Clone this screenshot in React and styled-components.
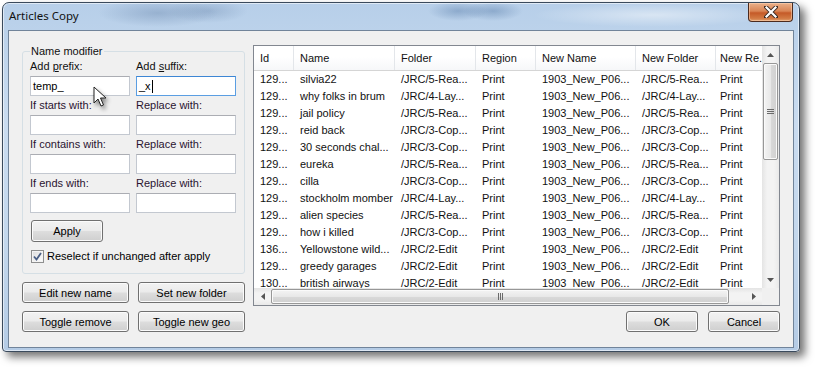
import React from 'react'
import styled, { createGlobalStyle } from 'styled-components'

const GlobalStyle = createGlobalStyle`
  html, body {
    margin: 0;
    padding: 0;
    background: #ffffff;
  }
  body {
    width: 816px;
    height: 368px;
    overflow: hidden;
    font-family: "Liberation Sans", Arial, sans-serif;
    font-size: 11px;
    color: #000;
  }
`;

const Desktop = styled.div`
  position: relative;
  width: 816px;
  height: 368px;
  padding: 2px 0 0 2px;
  box-sizing: border-box;
`;

const Window = styled.div`
  width: 798px;
  height: 350px;
  box-sizing: border-box;
  display: flex;
  flex-direction: column;
  padding: 0 5px 3px 5px;
  border: 1px solid #3a4a5c;
  border-radius: 7px 7px 4px 4px;
  background:
    radial-gradient(ellipse 60px 14px at 155px 10px, rgba(90, 120, 160, 0.35), transparent),
    radial-gradient(ellipse 40px 12px at 205px 8px, rgba(90, 120, 160, 0.3), transparent),
    radial-gradient(ellipse 30px 10px at 455px 8px, rgba(60, 100, 150, 0.35), transparent),
    radial-gradient(ellipse 30px 10px at 490px 8px, rgba(60, 100, 150, 0.35), transparent),
    radial-gradient(ellipse 120px 12px at 650px 12px, rgba(255, 255, 255, 0.45), transparent),
    linear-gradient(180deg, #b7cfe9 0%, #cadcf0 35%, #c3d7ec 70%, #b4cbe5 100%);
  box-shadow:
    inset 0 0 0 1px rgba(255, 255, 255, 0.55),
    5px 5px 8px rgba(0, 0, 0, 0.55);
`;

const TitleBar = styled.div`
  height: 27px;
  flex: none;
  display: flex;
  align-items: flex-start;
  justify-content: space-between;
`;

const Title = styled.div`
  font-family: "Noto Sans", "Open Sans", sans-serif;
  font-size: 11.5px;
  color: #111;
  line-height: 26px;
  padding-left: 1px;
`;

const CloseButton = styled.div`
  width: 45px;
  height: 19px;
  margin-right: 1px;
  box-sizing: border-box;
  border: 1px solid #4b2a1e;
  border-top: none;
  border-radius: 0 0 4px 4px;
  background: linear-gradient(180deg, #eab08a 0%, #d98555 45%, #c55a28 55%, #d27a43 85%, #e0a070 100%);
  box-shadow: inset 0 0 0 1px rgba(255, 220, 190, 0.5);
  display: flex;
  align-items: center;
  justify-content: center;
`;

const Client = styled.div`
  flex: 1;
  box-sizing: border-box;
  border: 1px solid #71849a;
  background: #f0f0f0;
  padding: 14px 13px 15px 13px;
  display: grid;
  grid-template-columns: 223px 527px;
  column-gap: 8px;
`;

const LeftColumn = styled.div`
  display: flex;
  flex-direction: column;
  gap: 8px;
`;

const RightColumn = styled.div`
  display: flex;
  flex-direction: column;
  gap: 5px;
`;

const GroupBox = styled.fieldset`
  margin: 0;
  height: 229px;
  box-sizing: border-box;
  border: 1px solid #d5dfe5;
  border-radius: 3px;
  padding: 1px 8px 0 7px;
  display: flex;
  flex-direction: column;
`;

const Legend = styled.legend`
  padding: 0 1px;
  line-height: 13px;
  color: #111;
`;

const FieldGrid = styled.div`
  display: grid;
  grid-template-columns: 100px 100px;
  column-gap: 6px;
  row-gap: 2px;
`;

const Field = styled.div`
  display: flex;
  flex-direction: column;
`;

const Label = styled.label`
  height: 14px;
  line-height: 14px;
  margin-bottom: 3px;
  color: ${p => (p.plain ? '#111' : '#2a1430')};
  white-space: nowrap;
`;

const TextBox = styled.div`
  height: 20px;
  box-sizing: border-box;
  background: #fff;
  border: 1px solid ${p => (p.focused ? '#5b9ee2' : '#c3c8d0')};
  border-top-color: ${p => (p.focused ? '#3d86d4' : '#abadb3')};
  padding: 0 2px;
  line-height: 18px;
  display: flex;
  align-items: center;
  white-space: nowrap;
`;

const Caret = styled.span`
  display: inline-block;
  width: 1px;
  height: 13px;
  background: #000;
  margin-left: 1px;
`;

const Button = styled.div`
  box-sizing: border-box;
  width: ${p => p.w}px;
  height: ${p => p.h || 21}px;
  border: 1px solid #707070;
  border-radius: 3px;
  background: linear-gradient(180deg, #f2f2f2 0%, #ebebeb 48%, #dddddd 52%, #cfcfcf 100%);
  box-shadow: inset 0 0 0 1px #fbfbfb;
  display: flex;
  align-items: center;
  justify-content: center;
  color: #000;
  white-space: nowrap;
`;

const ApplyButton = styled(Button)`
  margin: 7px 0 0 1px;
`;

const CheckRow = styled.div`
  display: flex;
  align-items: center;
  gap: 3px;
  height: 14px;
  margin: 7px 0 0 1px;
`;

const CheckBox = styled.div`
  width: 13px;
  height: 13px;
  box-sizing: border-box;
  border: 1px solid #8e8f8f;
  background: linear-gradient(135deg, #dcdcdc 0%, #f4f4f4 70%, #ffffff 100%);
  box-shadow: inset 0 0 0 1px #f4f4f4;
  display: flex;
  align-items: center;
  justify-content: center;
`;

const ButtonRow = styled.div`
  display: flex;
  gap: ${p => p.gap || 9}px;
  justify-content: ${p => (p.right ? 'flex-end' : 'flex-start')};
`;

const ListPanel = styled.div`
  height: 261px;
  box-sizing: border-box;
  border: 1px solid #828790;
  background: #fff;
  display: grid;
  grid-template-columns: 1fr 17px;
  grid-template-rows: 1fr 17px;
  overflow: hidden;
`;

const ListBody = styled.div`
  overflow: hidden;
  min-width: 0;
  min-height: 0;
`;

const columns = '40px 101px 81px 60px 100px 80px 47px';

const HeaderRow = styled.div`
  display: grid;
  grid-template-columns: ${columns};
  height: 25px;
  box-sizing: border-box;
  border-bottom: 1px solid #d5d5d5;
  background: linear-gradient(180deg, #ffffff 0%, #ffffff 45%, #f6f7f9 100%);
`;

const HeaderCell = styled.div`
  padding-left: ${p => (p.last ? 4 : 6)}px;
  line-height: 24px;
  border-right: ${p => (p.last ? 'none' : '1px solid #e3e6ea')};
  white-space: nowrap;
  overflow: hidden;
  color: #111;
`;

const Row = styled.div`
  display: grid;
  grid-template-columns: ${columns};
  height: 17px;
  line-height: 17px;
`;

const Cell = styled.div`
  padding-left: ${p => (p.last ? 4 : 6)}px;
  white-space: nowrap;
  overflow: hidden;
  color: #111;
`;

const VScroll = styled.div`
  display: flex;
  flex-direction: column;
  background: linear-gradient(90deg, #e4e4e4 0%, #f3f3f3 30%, #f3f3f3 70%, #e9e9e9 100%);
`;

const HScroll = styled.div`
  display: flex;
  background: linear-gradient(180deg, #e4e4e4 0%, #f3f3f3 30%, #f3f3f3 70%, #e9e9e9 100%);
`;

const Corner = styled.div`
  background: #f0f0f0;
`;

const ArrowButton = styled.div`
  flex: none;
  width: 17px;
  height: 17px;
  display: flex;
  align-items: center;
  justify-content: center;
`;

const VThumb = styled.div`
  flex: none;
  height: 97px;
  margin: 0 1px;
  box-sizing: border-box;
  border: 1px solid #979797;
  border-radius: 2px;
  background: linear-gradient(90deg, #f4f4f4 0%, #e8e8e8 50%, #d9d9d9 51%, #d0d0d0 100%);
  box-shadow: inset 0 0 0 1px #fafafa;
  display: flex;
  align-items: center;
  justify-content: center;
`;

const HThumb = styled.div`
  flex: none;
  width: 458px;
  margin: 1px 0;
  box-sizing: border-box;
  border: 1px solid #979797;
  border-radius: 2px;
  background: linear-gradient(180deg, #f4f4f4 0%, #e8e8e8 50%, #d9d9d9 51%, #d0d0d0 100%);
  box-shadow: inset 0 0 0 1px #fafafa;
  display: flex;
  align-items: center;
  justify-content: center;
`;

const Track = styled.div`
  flex: 1;
`;

const Cursor = styled.svg`
  position: absolute;
  left: 93px;
  top: 86px;
  filter: drop-shadow(2px 3px 2px rgba(0, 0, 0, 0.45));
`;

const Arrow = ({ dir }) => {
  const pts = {
    up: '0,4 3.5,0 7,4',
    down: '0,0 3.5,4 7,0',
    left: '4,0 0,3.5 4,7',
    right: '0,0 4,3.5 0,7',
  }[dir]
  const vertical = dir === 'up' || dir === 'down'
  return (
    <svg width={vertical ? 7 : 4} height={vertical ? 4 : 7}>
      <polygon points={pts} fill="#555" />
    </svg>
  )
}

const rows = [
  ['129...', 'silvia22', '/JRC/5-Rea...'],
  ['129...', 'why folks in brum', '/JRC/4-Lay...'],
  ['129...', 'jail policy', '/JRC/5-Rea...'],
  ['129...', 'reid back', '/JRC/3-Cop...'],
  ['129...', '30 seconds chal...', '/JRC/3-Cop...'],
  ['129...', 'eureka', '/JRC/5-Rea...'],
  ['129...', 'cilla', '/JRC/3-Cop...'],
  ['129...', 'stockholm momber', '/JRC/4-Lay...'],
  ['129...', 'alien species', '/JRC/5-Rea...'],
  ['129...', 'how i killed', '/JRC/3-Cop...'],
  ['136...', 'Yellowstone wild...', '/JRC/2-Edit'],
  ['129...', 'greedy garages', '/JRC/2-Edit'],
  ['130...', 'british airways', '/JRC/2-Edit'],
]

const headers = ['Id', 'Name', 'Folder', 'Region', 'New Name', 'New Folder', 'New Re.']

const App = () => (
  <Desktop>
    <GlobalStyle />
    <Window>
      <TitleBar>
        <Title>Articles Copy</Title>
        <CloseButton>
          <svg width="14" height="12" viewBox="0 0 14 12">
            <path d="M2 1 L12 11 M12 1 L2 11" stroke="#3a2a22" strokeWidth="4" strokeLinecap="square" />
            <path d="M2.5 1.5 L11.5 10.5 M11.5 1.5 L2.5 10.5" stroke="#ffffff" strokeWidth="2.2" strokeLinecap="square" />
          </svg>
        </CloseButton>
      </TitleBar>
      <Client>
        <LeftColumn>
          <GroupBox>
            <Legend>Name modifier</Legend>
            <FieldGrid>
              <Field>
                <Label plain>Add <u>p</u>refix:</Label>
                <TextBox>temp_</TextBox>
              </Field>
              <Field>
                <Label plain>Add <u>s</u>uffix:</Label>
                <TextBox focused>_x<Caret /></TextBox>
              </Field>
              <Field>
                <Label>If starts with:</Label>
                <TextBox />
              </Field>
              <Field>
                <Label>Replace with:</Label>
                <TextBox />
              </Field>
              <Field>
                <Label>If contains with:</Label>
                <TextBox />
              </Field>
              <Field>
                <Label>Replace with:</Label>
                <TextBox />
              </Field>
              <Field>
                <Label>If ends with:</Label>
                <TextBox />
              </Field>
              <Field>
                <Label>Replace with:</Label>
                <TextBox />
              </Field>
            </FieldGrid>
            <ApplyButton w={72} h={22}>Apply</ApplyButton>
            <CheckRow>
              <CheckBox>
                <svg width="9" height="9" viewBox="0 0 9 9">
                  <path d="M1 4.5 L3.5 7.5 L8 1" fill="none" stroke="#4a5f85" strokeWidth="1.8" />
                </svg>
              </CheckBox>
              <span>Reselect if unchanged after apply</span>
            </CheckRow>
          </GroupBox>
          <ButtonRow>
            <Button w={107}>Edit new name</Button>
            <Button w={107}>Set new folder</Button>
          </ButtonRow>
          <ButtonRow>
            <Button w={107}>Toggle remove</Button>
            <Button w={107}>Toggle new geo</Button>
          </ButtonRow>
        </LeftColumn>
        <RightColumn>
          <ListPanel>
            <ListBody>
              <HeaderRow>
                {headers.map((h, i) => (
                  <HeaderCell key={h} last={i === headers.length - 1}>{h}</HeaderCell>
                ))}
              </HeaderRow>
              {rows.map((r, i) => (
                <Row key={i}>
                  <Cell>{r[0]}</Cell>
                  <Cell>{r[1]}</Cell>
                  <Cell>{r[2]}</Cell>
                  <Cell>Print</Cell>
                  <Cell>1903_New_P06...</Cell>
                  <Cell>{r[2]}</Cell>
                  <Cell last>Print</Cell>
                </Row>
              ))}
            </ListBody>
            <VScroll>
              <ArrowButton><Arrow dir="up" /></ArrowButton>
              <VThumb>
                <svg width="7" height="7">
                  <path d="M0 1.5 H7 M0 3.5 H7 M0 5.5 H7" stroke="#6a6a6a" strokeWidth="1" />
                </svg>
              </VThumb>
              <Track />
              <ArrowButton><Arrow dir="down" /></ArrowButton>
            </VScroll>
            <HScroll>
              <ArrowButton><Arrow dir="left" /></ArrowButton>
              <HThumb>
                <svg width="7" height="7">
                  <path d="M1.5 0 V7 M3.5 0 V7 M5.5 0 V7" stroke="#6a6a6a" strokeWidth="1" />
                </svg>
              </HThumb>
              <Track />
              <ArrowButton><Arrow dir="right" /></ArrowButton>
            </HScroll>
            <Corner />
          </ListPanel>
          <ButtonRow right gap={10}>
            <Button w={72}>OK</Button>
            <Button w={72}>Cancel</Button>
          </ButtonRow>
        </RightColumn>
      </Client>
    </Window>
    <Cursor width="14" height="22" viewBox="0 0 14 22">
      <path d="M1 1 L1 17 L5 13 L8 20 L10.5 19 L7.5 12 L13 12 Z" fill="#ffffff" stroke="#222" strokeWidth="1" strokeLinejoin="round" />
    </Cursor>
  </Desktop>
)

export default App
